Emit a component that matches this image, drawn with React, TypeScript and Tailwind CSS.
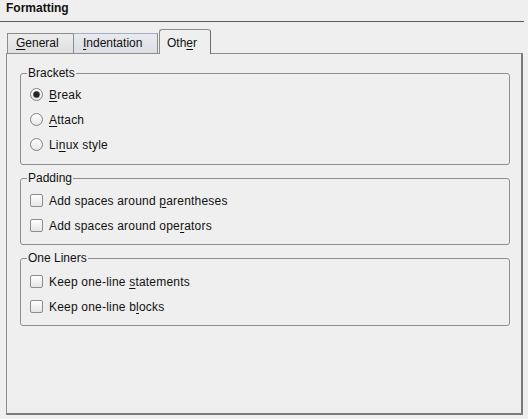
import React from 'react';

// Mnemonic label: underline one character
function Mn({ text, at }: { text: string; at: number }) {
  return (
    <>
      {text.slice(0, at)}
      <span className="underline underline-offset-[2px]">{text[at]}</span>
      {text.slice(at + 1)}
    </>
  );
}

function Radio({ checked }: { checked?: boolean }) {
  return (
    <svg width="13" height="13" viewBox="0 0 13 13" className="shrink-0">
      <defs>
        <linearGradient id="rg" x1="0" y1="0" x2="0" y2="1">
          <stop offset="0" stopColor="#ffffff" />
          <stop offset="1" stopColor="#e6e6e6" />
        </linearGradient>
      </defs>
      <circle cx="6.5" cy="6.5" r="6" fill="url(#rg)" stroke="#808080" strokeWidth="1" />
      {checked && (
        <>
          <circle cx="6.5" cy="6.5" r="3.6" fill="#8a8a8a" />
          <circle cx="6.5" cy="6.5" r="2.9" fill="#262626" />
        </>
      )}
    </svg>
  );
}

function Check() {
  return (
    <span className="block w-[13px] h-[13px] shrink-0 rounded-[2px] border border-[#8c8c8c] bg-gradient-to-b from-[#fefefe] to-[#e6e6e6]" />
  );
}

function Group({
  title,
  children,
  className = '',
}: {
  title: string;
  children: React.ReactNode;
  className?: string;
}) {
  return (
    <fieldset
      className={`ml-[13px] w-[490px] rounded-[3px] border border-[#8e8e8e] ${className}`}
    >
      <legend className="ml-[6px] px-[1px] leading-[14px]">{title}</legend>
      {children}
    </fieldset>
  );
}

function Row({ children }: { children: React.ReactNode }) {
  return (
    <div className="flex h-[25px] items-center gap-[6px] pl-[9px] tracking-[0.2px]">
      {children}
    </div>
  );
}

export default function App() {
  return (
    <div
      className="w-[528px] h-[419px] bg-[#efefef] text-[12px] leading-[14px] text-[#111]"
      style={{ fontFamily: '"Liberation Sans", Arial, sans-serif' }}
    >
      <div className="h-[22px] w-[524px] border-b border-[#5a5a5a] px-[6px] pt-[1px] font-bold">
        Formatting
      </div>

      {/* tab strip */}
      <div className="mt-[7px] flex items-end pl-[7px]">
        <div className="h-[20px] w-[66px] border-l border-t border-[#8c8c8c] bg-gradient-to-b from-[#ececec] to-[#e0e0e0] pl-[8px] pt-[2px]">
          <Mn text="General" at={0} />
        </div>
        <div className="h-[20px] w-[85px] border-l border-r border-t border-[#8c8c8c] border-t-[#9eaecb] bg-gradient-to-b from-[#e8eaee] to-[#dcdfe5] pl-[9px] pt-[2px]">
          <Mn text="Indentation" at={0} />
        </div>
        <div className="relative z-10 -mb-px ml-px h-[25px] w-[52px] rounded-t-[3px] border-l border-r border-t border-[#8c8c8c] border-r-[#6e6e6e] bg-[#efefef] pl-[7px] pt-[6px]">
          <Mn text="Other" at={3} />
        </div>
      </div>

      {/* tab pane */}
      <div className="ml-[6px] h-[362px] w-[517px] border border-[#8c8c8c] border-b-2 border-r-2 border-b-[#7a7a7a] border-r-[#7a7a7a]">
        <Group title="Brackets" className="mt-[12px]">
          <div className="pb-[7px] pt-[2px]">
            <Row>
              <Radio checked />
              <span><Mn text="Break" at={0} /></span>
            </Row>
            <Row>
              <Radio />
              <span><Mn text="Attach" at={0} /></span>
            </Row>
            <Row>
              <Radio />
              <span><Mn text="Linux style" at={2} /></span>
            </Row>
          </div>
        </Group>

        <Group title="Padding" className="mt-[6px]">
          <div className="pb-[6px] pt-[3px]">
            <Row>
              <Check />
              <span><Mn text="Add spaces around parentheses" at={18} /></span>
            </Row>
            <Row>
              <Check />
              <span><Mn text="Add spaces around operators" at={21} /></span>
            </Row>
          </div>
        </Group>

        <Group title="One Liners" className="mt-[6px]">
          <div className="pb-[6px] pt-[4px]">
            <Row>
              <Check />
              <span><Mn text="Keep one-line statements" at={14} /></span>
            </Row>
            <Row>
              <Check />
              <span><Mn text="Keep one-line blocks" at={15} /></span>
            </Row>
          </div>
        </Group>
      </div>
    </div>
  );
}
